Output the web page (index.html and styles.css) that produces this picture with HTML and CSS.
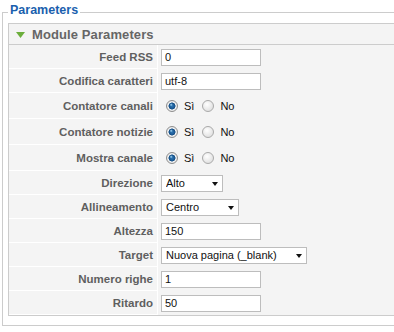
FILE: index.html
```html
<!DOCTYPE html>
<html>
<head>
<meta charset="utf-8">
<title>Parameters</title>
<link rel="stylesheet" href="styles.css">
</head>
<body>
<div class="page">
  <fieldset class="params">
    <legend class="params-legend">Parameters</legend>
    <div class="panel">
      <div class="panel-head">
        <svg class="toggle" width="9" height="6" viewBox="0 0 9 6"><polygon points="0,0 9,0 4.5,6" fill="#6cae3c"/></svg>
        <span class="panel-title">Module Parameters</span>
      </div>
      <div class="rows">
        <div class="key">Feed RSS</div>
        <div class="val"><input class="text" type="text" value="0"></div>

        <div class="key">Codifica caratteri</div>
        <div class="val"><input class="text" type="text" value="utf-8"></div>

        <div class="key tall">Contatore canali</div>
        <div class="val tall">
          <input class="radio" type="radio" name="cc" checked><span class="opt">Sì</span>
          <input class="radio second" type="radio" name="cc"><span class="opt">No</span>
        </div>

        <div class="key tall">Contatore notizie</div>
        <div class="val tall">
          <input class="radio" type="radio" name="cn" checked><span class="opt">Sì</span>
          <input class="radio second" type="radio" name="cn"><span class="opt">No</span>
        </div>

        <div class="key tall">Mostra canale</div>
        <div class="val tall">
          <input class="radio" type="radio" name="mc" checked><span class="opt">Sì</span>
          <input class="radio second" type="radio" name="mc"><span class="opt">No</span>
        </div>

        <div class="key">Direzione</div>
        <div class="val"><span class="sel"><select class="select w-dir"><option>Alto</option></select></span></div>

        <div class="key">Allineamento</div>
        <div class="val"><span class="sel"><select class="select w-all"><option>Centro</option></select></span></div>

        <div class="key">Altezza</div>
        <div class="val"><input class="text" type="text" value="150"></div>

        <div class="key">Target</div>
        <div class="val"><span class="sel"><select class="select w-tgt"><option>Nuova pagina (_blank)</option></select></span></div>

        <div class="key">Numero righe</div>
        <div class="val"><input class="text" type="text" value="1"></div>

        <div class="key">Ritardo</div>
        <div class="val"><input class="text" type="text" value="50"></div>
      </div>
    </div>
  </fieldset>
</div>
</body>
</html>
```

FILE: styles.css
```css
html, body {
  margin: 0;
  padding: 0;
  background: #fff;
  overflow: hidden;
}

body {
  font-family: "Liberation Sans", Arial, sans-serif;
  font-size: 11px;
  color: #333;
}

.page {
  width: 440px;
}

.params {
  margin: 3px 0 0 2px;
  padding: 2px 0 9px 5px;
  border: 1px solid #cccccc;
  min-width: 0;
}

.params-legend {
  padding: 0 2px 4px;
  margin: 0;
  font-size: 12.5px;
  line-height: 14px;
  font-weight: bold;
  color: #1a5fae;
}

.panel {
  border: 1px solid #cccccc;
  background: #f4f4f4;
}

.panel-head {
  height: 20px;
  border-bottom: 1px solid #cccccc;
  display: flex;
  align-items: center;
  padding-left: 7px;
}

.toggle {
  display: block;
  margin-top: 1px;
}

.panel-title {
  margin-left: 7px;
  font-size: 13px;
  font-weight: bold;
  color: #666;
  letter-spacing: 0.1px;
}

.rows {
  display: grid;
  grid-template-columns: 149px 1fr;
}

.key {
  height: 24px;
  box-sizing: border-box;
  border-right: 1px solid #fff;
  border-bottom: 1px solid #fff;
  display: flex;
  align-items: center;
  justify-content: flex-end;
  padding-right: 4px;
  font-size: 11.5px;
  font-weight: bold;
  color: #5f5f5f;
  white-space: nowrap;
}

.val {
  height: 24px;
  box-sizing: border-box;
  display: flex;
  align-items: center;
  padding-left: 3px;
  color: #111;
}

.tall {
  height: 26px;
}

.text {
  box-sizing: border-box;
  width: 100px;
  height: 17px;
  margin: 0;
  padding: 0 3px;
  border: 1px solid #bdbdbd;
  background: #fff;
  font-family: "Liberation Sans", Arial, sans-serif;
  font-size: 11px;
  color: #111;
  outline: none;
}

.radio {
  -webkit-appearance: none;
  appearance: none;
  box-sizing: border-box;
  width: 12px;
  height: 12px;
  margin: 0 6px 0 5px;
  border-radius: 50%;
  border: 1px solid #a9a9a9;
  background: radial-gradient(circle at 40% 35%, #ffffff 0, #e4e4e4 6px);
}

.radio:checked {
  border-color: #8e8e8e;
  background:
    radial-gradient(circle at 42% 38%, #a8dcf8 0, rgba(168, 220, 248, 0) 1.6px),
    radial-gradient(circle, #2e78b8 0, #164f86 3.2px, #f3f3f3 3.8px, #dedede 6px);
}

.radio.second {
  margin-left: 8px;
}

.opt {
  font-size: 11px;
  color: #111;
}

.sel {
  position: relative;
  display: inline-block;
}

.sel::after {
  content: "";
  position: absolute;
  right: 5px;
  top: 7px;
  border-style: solid;
  border-width: 4px 3.5px 0 3.5px;
  border-color: #111 transparent transparent transparent;
  pointer-events: none;
}

.select {
  -webkit-appearance: none;
  appearance: none;
  box-sizing: border-box;
  display: block;
  height: 17px;
  margin: 0;
  padding: 0 0 0 4px;
  border: 1px solid #bdbdbd;
  border-radius: 0;
  background: #fff;
  font-family: "Liberation Sans", Arial, sans-serif;
  font-size: 11px;
  color: #111;
  outline: none;
}

.w-dir { width: 62px; }
.w-all { width: 78px; }
.w-tgt { width: 146px; }
```
